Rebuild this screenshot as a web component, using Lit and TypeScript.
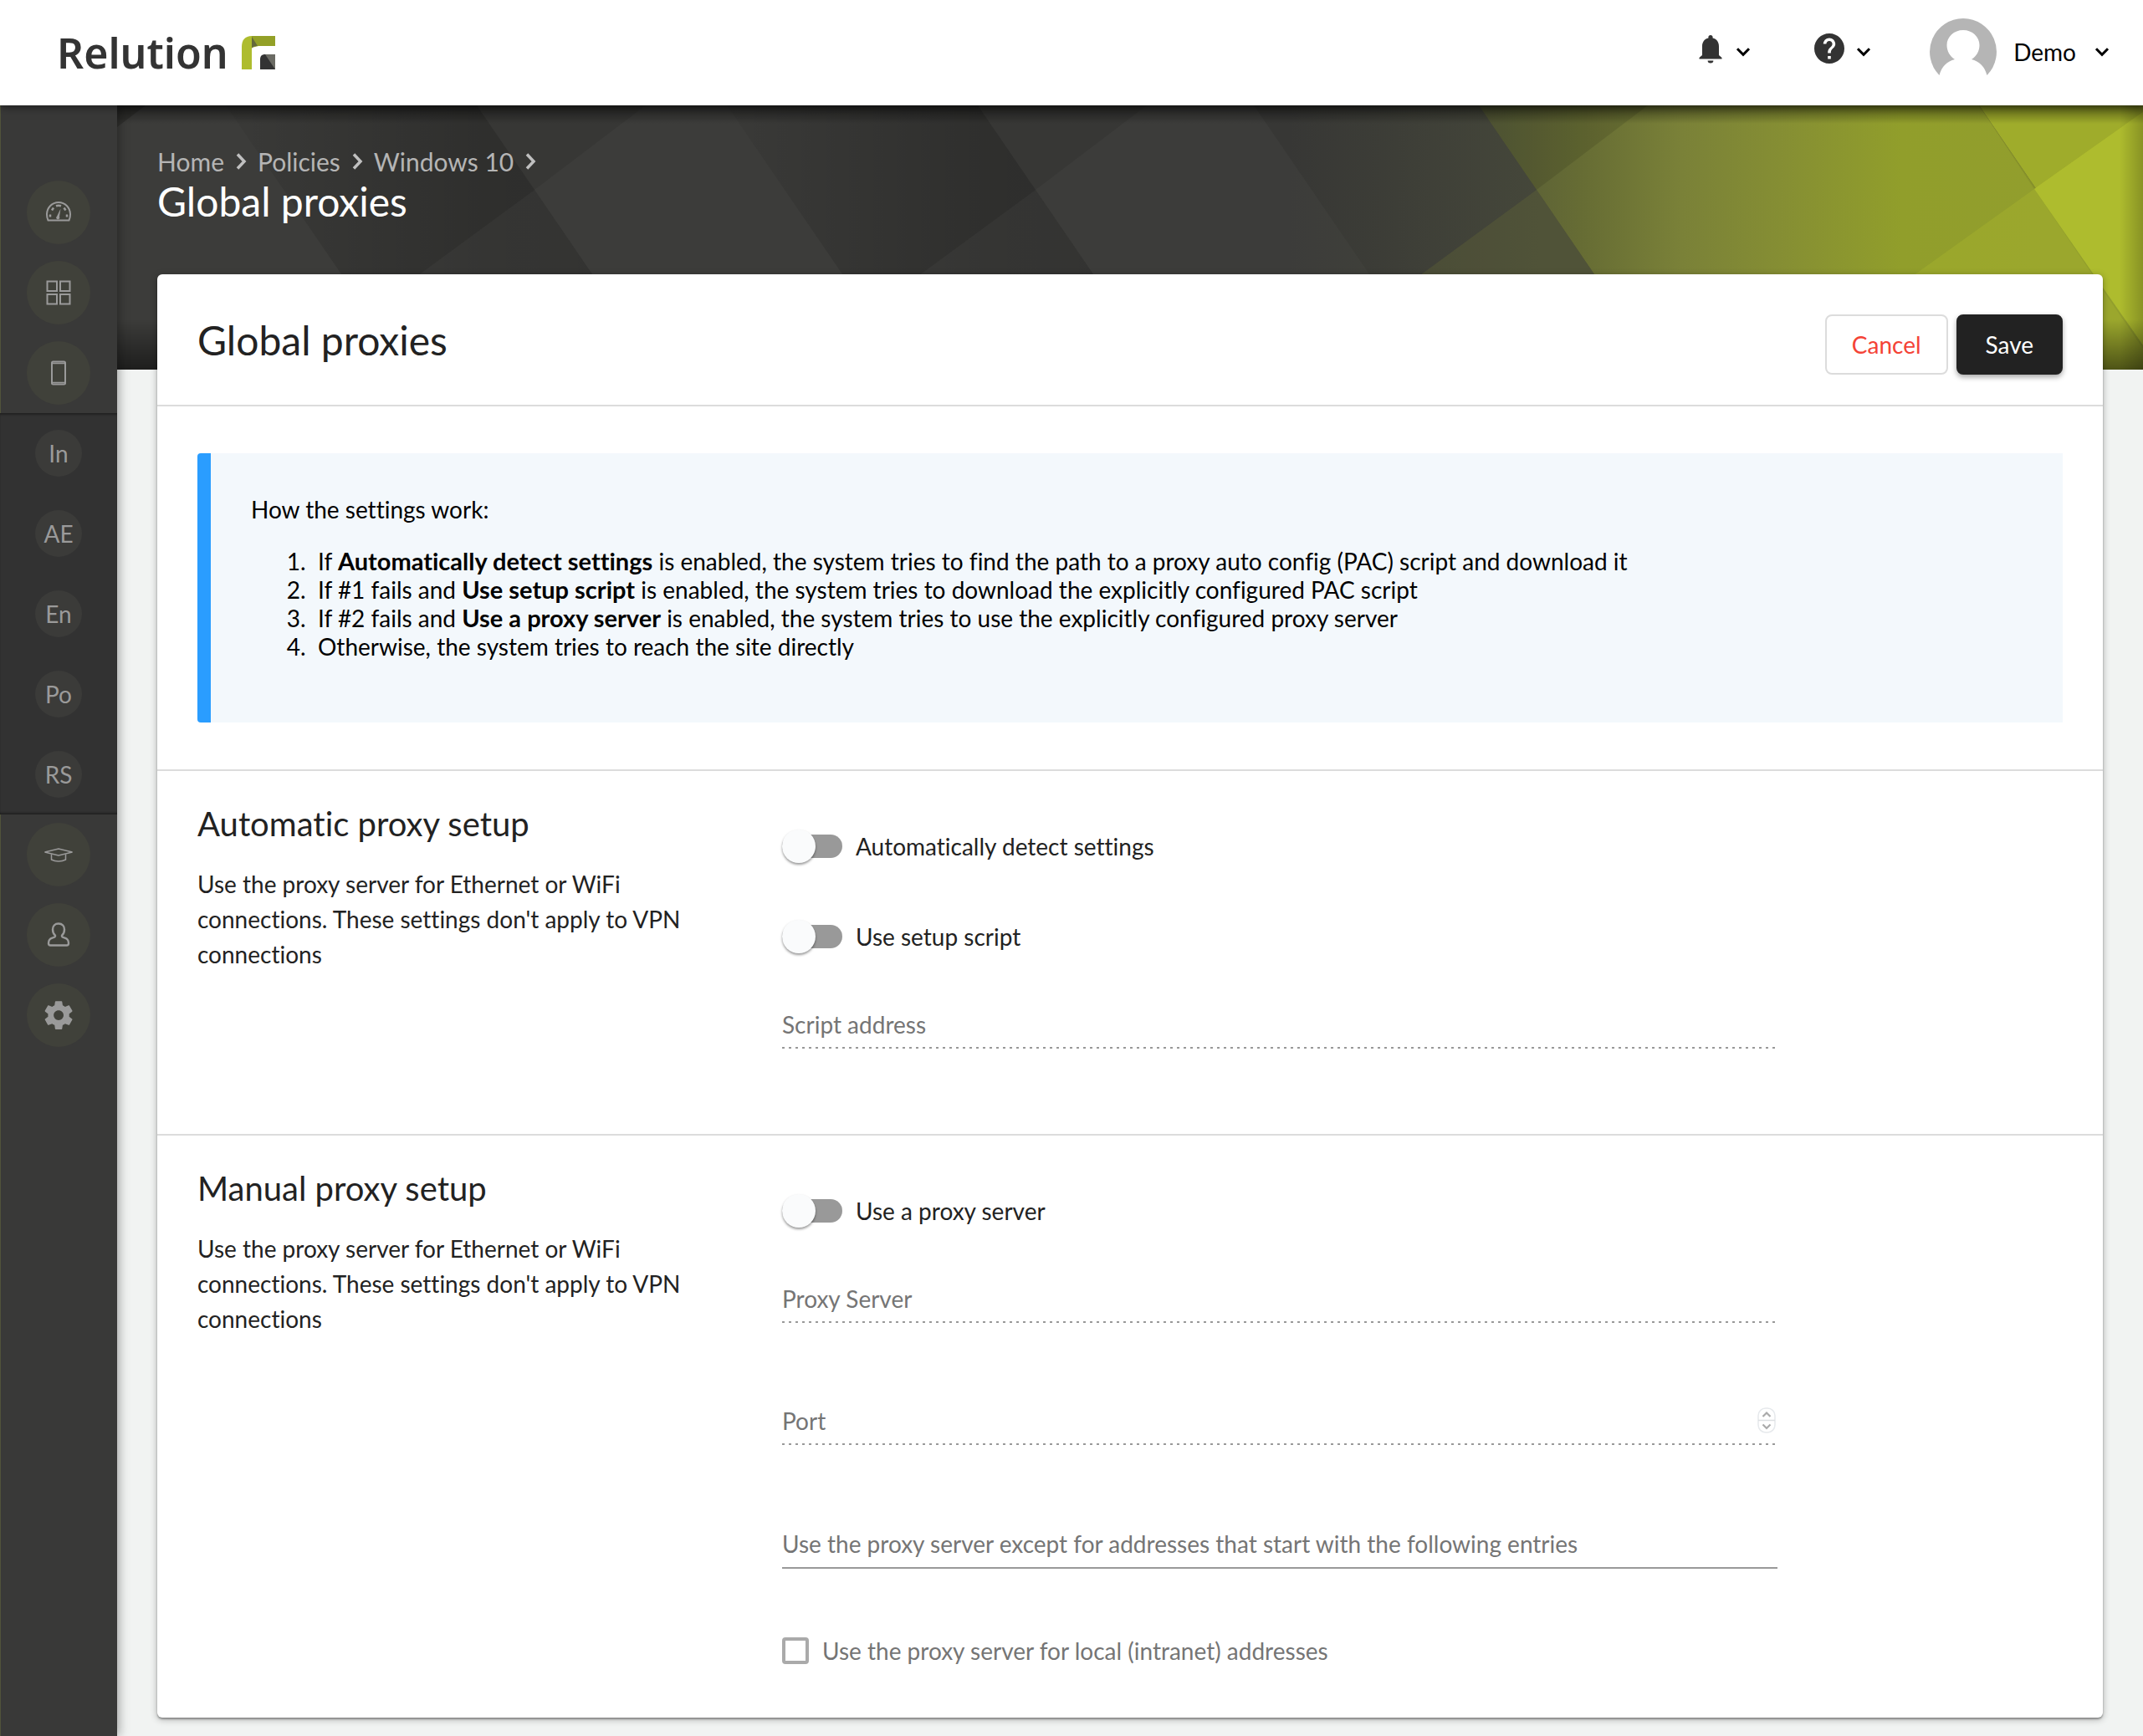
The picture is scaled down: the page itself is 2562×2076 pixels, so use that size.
import { LitElement, html, css, svg, nothing } from "lit";
import { customElement } from "lit/decorators.js";

const chevronDown = html`<svg class="caret" viewBox="0 0 18 12" aria-hidden="true"><path d="M2 2.2 9 9.4 16 2.2" /></svg>`;
const chevronRight = html`<svg class="sep" viewBox="0 0 14 20" aria-hidden="true"><path d="M3 1.5 11 10 3 18.5" /></svg>`;

const icons = {
  dashboard: svg`<path d="M2.500 23.500C1.500 21.500 1 19 1 16.500 1 8.500 7 2 15 2s14 6.500 14 14.500c0 2.500-.5 5-1.500 7z" transform="translate(0 1)"/>
    <path d="M5 20.500v-3M7 12.500l2-3M12 7.300c2-.7 4-.7 6 0M21.500 9.500l2 3M25 20.500v-3" stroke-width="2.500"/>
    <path d="M17.500 10.500l-4.500 9.200a2 2 0 1 0 3 .6z" fill="currentColor" stroke="none"/>`,
  grid: svg`<rect x="1.500" y="1.500" width="11.500" height="11.500"/><rect x="17" y="1.500" width="11.500" height="11.500"/><rect x="1.500" y="17" width="11.500" height="11.500"/><rect x="17" y="17" width="11.500" height="11.500"/>`,
  phone: svg`<rect x="7" y="1.500" width="16" height="27" rx="1.500"/><path d="M7 3.500h16M7 26.500h16" stroke-width="1.500"/>`,
  education: svg`<path d="M-1.500 12 15 8l16.500 4L15 16z" stroke-width="1.500"/><path d="M6.500 14.500V21c5 2.600 12 2.600 17 0v-6.500" stroke-width="1.500"/>`,
  user: svg`<path d="M15 1.500c-4.500 0-7 3-7 7 0 3 1 5.500 3 7.200.6 1.800-1 2.300-3.500 3C4 19.800 3 22 3 25c0 1.500.7 2.500 2.200 2.500h19.600c1.500 0 2.200-1 2.200-2.500 0-3-1-5.200-4.500-6.300-2.500-.7-4.100-1.200-3.500-3 2-1.700 3-4.200 3-7.200 0-4-2.500-7-7-7z" stroke-width="2.400"/>`,
  settings: svg`<g transform="translate(-5.200 -5.200) scale(1.690)"><path fill="currentColor" stroke="none" d="M19.430 12.980c.04-.32.070-.640.070-.980s-.03-.660-.07-.980l2.110-1.650c.19-.15.240-.42.120-.640l-2-3.460c-.12-.22-.39-.3-.61-.22l-2.490 1c-.52-.4-1.080-.730-1.690-.980l-.38-2.650C14.460 2.180 14.250 2 14 2h-4c-.25 0-.46.180-.49.420l-.38 2.650c-.61.250-1.170.59-1.690.980l-2.490-1c-.23-.09-.49 0-.61.220l-2 3.460c-.13.220-.07.490.12.640l2.110 1.650c-.04.320-.07.650-.07.980s.03.660.07.980l-2.110 1.650c-.19.150-.24.420-.12.640l2 3.460c.12.220.39.3.61.220l2.490-1c.52.4 1.080.730 1.690.980l.38 2.650c.03.240.24.420.49.420h4c.25 0 .46-.18.490-.42l.38-2.650c.61-.25 1.170-.59 1.690-.980l2.490 1c.23.090.49 0 .61-.22l2-3.460c.12-.22.070-.49-.12-.640l-2.110-1.650zM12 15.500c-1.930 0-3.500-1.570-3.500-3.500s1.570-3.500 3.500-3.500 3.500 1.570 3.500 3.500-1.570 3.500-3.500 3.500z"/></g>`,
};

type IconName = keyof typeof icons;

const topNav: [IconName, string][] = [
  ["dashboard", "Dashboard"],
  ["grid", "Apps"],
  ["phone", "Devices"],
];
const shortcuts = ["In", "AE", "En", "Po", "RS"];
const bottomNav: [IconName, string][] = [
  ["education", "Education"],
  ["user", "Users"],
  ["settings", "Settings"],
];

@customElement("app-header")
export class AppHeader extends LitElement {
  static styles = css`
    :host {
      display: flex;
      align-items: center;
      justify-content: space-between;
      height: 126px;
      box-sizing: border-box;
      padding: 0 40px 0 68px;
      background: #fff;
      box-shadow: 0 2px 10px rgba(0, 0, 0, 0.5);
      z-index: 2;
      font-size: 28px;
      color: #000;
    }
    .brand {
      display: flex;
      align-items: center;
      gap: 16px;
      color: #333;
      text-decoration: none;
      font: 600 50px/64px "Noto Sans", sans-serif;
    }
    .mark { width: 40px; height: 40px; }
    .tools { display: flex; align-items: center; padding-bottom: 2px; }
    button {
      display: flex;
      align-items: center;
      border: 0;
      padding: 0;
      background: none;
      font: inherit;
      color: inherit;
    }
    .bell { gap: 16px; margin-right: 76px; }
    .help { gap: 14px; margin-right: 70px; }
    .user { gap: 20px; }
    .bell-icon { width: 28px; height: 34px; margin-bottom: 6px; }
    .help-icon { width: 36px; height: 36px; margin-bottom: 8px; }
    .avatar { width: 80px; height: 80px; }
    .name { margin-right: 2px; }
    .caret { width: 18px; height: 12px; fill: none; stroke: #000; stroke-width: 3; }
  `;
  render() {
    return html`
      <a class="brand" href="#"><span>Relution</span>
        <svg class="mark" viewBox="0 0 40 40" aria-hidden="true">
          <path d="M12 0h28v12H20l-8 2z" fill="#93a027" />
          <path d="M12 0C4 0 0 5 0 13v27h12V0z" fill="#aebc2e" />
          <path d="M12 1l7 11c-4 0-7 1-7 4z" fill="#64693a" />
          <path d="M22 40V28c0-4 2-6 6-6h12v18z" fill="#333" />
          <path d="M28 22h12v18z" fill="#6b6b64" />
        </svg>
      </a>
      <div class="tools">
        <button class="bell" aria-label="Notifications">
          <svg class="bell-icon" viewBox="0 0 28 34" aria-hidden="true">
            <path fill="#333" d="M14 0c-1.600 0-2.600 1-2.600 2.600v1C6.500 4.800 4 8.500 4 13.500V24l-3.500 3v1.500h27V27L24 24V13.500c0-5-2.500-8.700-7.400-9.900v-1C16.600 1 15.600 0 14 0zM10.600 30.500a3.400 3 0 0 0 6.800 0z" />
          </svg>
          ${chevronDown}
        </button>
        <button class="help" aria-label="Help">
          <svg class="help-icon" viewBox="2 2 20 20" aria-hidden="true">
            <path fill="#333" d="M12 2C6.480 2 2 6.480 2 12s4.480 10 10 10 10-4.480 10-10S17.520 2 12 2zm1 17h-2v-2h2v2zm2.070-7.750l-.9.920C13.450 12.900 13 13.500 13 15h-2v-.5c0-1.100.45-2.100 1.170-2.830l1.240-1.260c.37-.36.590-.86.590-1.410 0-1.100-.9-2-2-2s-2 .9-2 2H8c0-2.210 1.790-4 4-4s4 1.790 4 4c0 .88-.36 1.680-.93 2.250z" />
          </svg>
          ${chevronDown}
        </button>
        <button class="user">
          <svg class="avatar" viewBox="0 0 80 80" aria-hidden="true">
            <path fill="#b5b5b5" d="M40 0a40 40 0 0 0-28.500 68C14 58 21 51 30 49c-6-4-9.500-10-9.500-17 0-10 8.500-18 19.500-18s19.500 8 19.500 18c0 7-3.500 13-9.500 17 9 2 16 9 18.500 19A40 40 0 0 0 40 0z" />
          </svg>
          <span class="name">Demo</span>
          ${chevronDown}
        </button>
      </div>
    `;
  }
}

@customElement("side-nav")
export class SideNav extends LitElement {
  static styles = css`
    :host {
      display: block;
      box-sizing: border-box;
      width: 140px;
      padding-top: 80px;
      background: #393938;
      color: #9a9a9a;
      font-size: 28px;
      line-height: 40px;
      box-shadow: inset 1px 0 0 #50533a, 2px 0 12px rgba(0, 0, 0, 0.35);
      z-index: 1;
    }
    .group { display: flex; flex-direction: column; }
    .shortcuts { background: #323232; box-shadow: inset 0 3px 2px -1px #222, inset 0 -3px 2px -1px #222; }
    a {
      display: flex;
      align-items: center;
      justify-content: center;
      height: 96px;
      color: inherit;
      text-decoration: none;
    }
    .disc {
      display: flex;
      align-items: center;
      justify-content: center;
      width: 76px;
      height: 76px;
      border-radius: 50%;
      background: #40413a;
    }
    .small { width: 56px; height: 56px; background: #3b3b39; }
    svg { width: 30px; height: 30px; overflow: visible; fill: none; stroke: currentColor; stroke-width: 2; }
  `;
  private iconLink([name, label]: [IconName, string]) {
    return html`<a href="#" aria-label=${label}><span class="disc"><svg viewBox="0 0 30 30" aria-hidden="true">${icons[name]}</svg></span></a>`;
  }
  render() {
    return html`
      <nav aria-label="Main">
        <div class="group">${topNav.map((i) => this.iconLink(i))}</div>
        <div class="group shortcuts">
          ${shortcuts.map((s) => html`<a href="#"><span class="disc small">${s}</span></a>`)}
        </div>
        <div class="group">${bottomNav.map((i) => this.iconLink(i))}</div>
      </nav>
    `;
  }
}

@customElement("hero-banner")
export class HeroBanner extends LitElement {
  static styles = css`
    :host { display: block; height: 316px; overflow: hidden; background: #3b3b39; }
    svg { display: block; width: 100%; height: 100%; }
  `;
  private facet(x: number) {
    return svg`
      <path d="M${x} 0L${x + 69} 101L${x + 202} 0z" fill="#000" opacity=".08"/>
      <path d="M${x + 69} 101L${x - 224} 316H${x + 216}z" fill="#fff" opacity=".03"/>`;
  }
  render() {
    const fold = (x: number) => svg`<path d="M${x} 0h300l216 316h-300z" fill="url(#fold)"/>`;
    return html`
      <svg viewBox="0 0 2422 316" preserveAspectRatio="xMaxYMin slice" aria-hidden="true">
        <defs>
          <linearGradient id="fold"><stop offset="0" stop-color="#000" stop-opacity=".04" /><stop offset=".6" stop-color="#000" stop-opacity=".22" /><stop offset="1" stop-color="#000" stop-opacity=".26" /></linearGradient>
          <linearGradient id="glow" gradientUnits="userSpaceOnUse" x1="1400" x2="1700" y1="0" y2="0"><stop offset="0" stop-color="#45473a" stop-opacity="0" /><stop offset="1" stop-color="#45473a" /></linearGradient>
          <linearGradient id="green" gradientUnits="userSpaceOnUse" x1="1628" x2="2300" y1="0" y2="0">
            <stop offset="0" stop-color="#555a39" /><stop offset=".18" stop-color="#666c34" /><stop offset=".36" stop-color="#7a8138" />
            <stop offset=".55" stop-color="#868f33" /><stop offset=".75" stop-color="#919e2b" /><stop offset="1" stop-color="#929e2d" />
          </linearGradient>
          <linearGradient id="top" x2="0" y2="1"><stop offset="0" stop-color="#000" stop-opacity=".45" /><stop offset="1" stop-color="#000" stop-opacity="0" /></linearGradient>
          <linearGradient id="bottom" x2="0" y2="1"><stop offset="0" stop-color="#000" stop-opacity="0" /><stop offset="1" stop-color="#000" stop-opacity=".5" /></linearGradient>
          <linearGradient id="edge"><stop offset="0" stop-color="#000" stop-opacity="0" /><stop offset="1" stop-color="#000" stop-opacity=".22" /></linearGradient>
        </defs>
        <rect width="2422" height="316" fill="#3c3c3a" />
        ${fold(130)}${fold(729)}
        <path d="M1359 0h269l216 316h-269z" fill="#000" opacity=".08" />
        <path d="M1029 0h599l216 316h-599z" fill="url(#glow)" />
        <path d="M1628 0h598l196 287v29h-578z" fill="url(#green)" />
        <path d="M2226 0h196v287z" fill="#aebc2e" />
        ${this.facet(430)}${this.facet(1029)}
        <path d="M1628 0l69 101L1830 0z" fill="#000" opacity=".1" />
        <path d="M1697 101L1404 316h440z" fill="#a4b030" opacity=".12" />
        <path d="M2226 0l66 100L2422 8V0z" fill="#5c6420" opacity=".18" />
        <path d="M2292 100L1990 316h449z" fill="#aebc2e" opacity=".3" />
        <path d="M2292 100L2422 8v279z" fill="#aebc2e" />
        <path d="M0 0h34L0 26z" fill="#000" opacity=".2" />
        <rect width="2422" height="22" fill="url(#top)" />
        <rect y="256" width="2422" height="60" fill="url(#bottom)" />
        <rect x="2394" width="28" height="316" fill="url(#edge)" />
      </svg>
    `;
  }
}

@customElement("proxy-settings")
export class ProxySettings extends LitElement {
  static styles = css`
    :host {
      display: block;
      border-radius: 6px;
      background: #fff;
      box-shadow: 0 2px 8px rgba(0, 0, 0, 0.3), 0 2px 2px rgba(0, 0, 0, 0.3);
      color: #222;
      font-size: 28px;
      line-height: 42px;
    }
    h2, h3, p, ol { margin: 0; font-weight: 400; }
    .head {
      display: flex;
      justify-content: space-between;
      align-items: flex-start;
      padding: 48px 48px 36px;
      border-bottom: 2px solid #dcdcdc;
    }
    h2 { font-size: 48px; line-height: 62px; }
    .actions { display: flex; gap: 10px; }
    button {
      box-sizing: border-box;
      height: 72px;
      padding: 0 30px;
      border: 2px solid #dcdcdc;
      border-radius: 8px;
      background: #fff;
      color: #f44336;
      font: inherit;
    }
    .primary {
      padding: 0 33px;
      border-color: #222;
      background: #222;
      color: #fff;
      box-shadow: 0 3px 6px rgba(0, 0, 0, 0.35);
    }
    .intro { padding: 56px 48px; border-bottom: 2px solid #dcdcdc; }
    .info {
      padding: 50px 48px 74px;
      border-left: 16px solid #2a9dff;
      border-radius: 4px 0 0 4px;
      background: #f3f8fc;
      color: #000;
      line-height: 34px;
    }
    ol { margin-top: 28px; padding-left: 80px; }
    li::marker { content: counter(list-item) ".\\00a0\\00a0"; }
    b { font-size: 29px; line-height: 32px; }
    .section {
      display: grid;
      grid-template-columns: 651fr 1190fr 293fr;
      column-gap: 48px;
      padding: 0 48px;
    }
    .section + .section { border-top: 2px solid #dcdcdc; }
    .about { display: flex; flex-direction: column; gap: 28px; padding-top: 40px; }
    .about p { max-width: 600px; }
    h3 { font-size: 40px; line-height: 46px; }
    .fields { display: flex; flex-direction: column; gap: 48px; padding: 60px 0; }
    .fields.last { padding-bottom: 50px; }
    .row { display: flex; align-items: center; gap: 16px; height: 60px; }
    .muted { color: #757575; margin-top: -22px; }
    .switch {
      appearance: none;
      width: 72px;
      height: 28px;
      margin: 0;
      border-radius: 14px;
      background: #999;
    }
    .switch::before {
      content: "";
      display: block;
      width: 40px;
      height: 40px;
      margin-top: -6px;
      border-radius: 50%;
      background: #fafbfc;
      box-shadow: 0 2px 3px rgba(0, 0, 0, 0.4);
    }
    .switch:checked::before { margin-left: 32px; }
    .tick {
      appearance: none;
      box-sizing: border-box;
      width: 32px;
      height: 32px;
      margin: 0;
      border: 4px solid #aaa;
      border-radius: 4px;
    }
    .field {
      display: grid;
      grid-template-columns: minmax(0, 1fr) auto;
      align-items: center;
      height: 54px;
      margin-bottom: 42px;
      color: #757575;
      background: repeating-linear-gradient(90deg, #999 0 3px, transparent 3px 8px) left bottom / 100% 2px no-repeat;
      padding-bottom: 2px;
    }
    .field.solid { background: none; border-bottom: 2px solid #999; height: 56px; padding-bottom: 0; }
    .field label { grid-area: 1 / 1; pointer-events: none; }
    .field input {
      grid-area: 1 / 1 / 2 / 3;
      width: 100%;
      height: 42px;
      box-sizing: border-box;
      padding: 0;
      border: 0;
      background: none;
      font: inherit;
      color: inherit;
      appearance: textfield;
      outline: none;
    }
    .field input::-webkit-inner-spin-button { appearance: none; }
    .spin { grid-area: 1 / 2; width: 22px; height: 32px; margin-right: 2px; }
  `;
  private toggle(id: string, label: string) {
    return html`<div class="row"><input class="switch" type="checkbox" role="switch" id=${id} /><label for=${id}>${label}</label></div>`;
  }
  private field(id: string, label: string, opts: { type?: string; disabled?: boolean } = {}) {
    const { type = "text", disabled = true } = opts;
    return html`<div class="field ${disabled ? "" : "solid"}">
      <label for=${id}>${label}</label>
      <input id=${id} type=${type} ?disabled=${disabled} />
      ${type === "number"
        ? html`<svg class="spin" viewBox="0 0 22 32" fill="none" aria-hidden="true">
            <rect x="1" y="1" width="20" height="29" rx="9" stroke="#e6e9ec" stroke-width="1.500" />
            <path d="M1 15.500h20" stroke="#dcdfe2" stroke-width="1.500" />
            <path d="M6.500 11 11 6.500l4.500 4.500M6.500 20.500 11 25l4.500-4.500" stroke="#aaa" stroke-width="2.200" />
          </svg>`
        : nothing}
    </div>`;
  }
  private about(title: string) {
    return html`<div class="about">
      <h3>${title}</h3>
      <p>Use the proxy server for Ethernet or WiFi connections. These settings don't apply to VPN connections</p>
    </div>`;
  }
  render() {
    return html`
      <div class="head">
        <h2>Global proxies</h2>
        <div class="actions"><button>Cancel</button><button class="primary">Save</button></div>
      </div>
      <div class="intro">
        <div class="info">
          <p>How the settings work:</p>
          <ol>
            <li>If <b>Automatically detect settings</b> is enabled, the system tries to find the path to a proxy auto config (PAC) script and download it</li>
            <li>If #1 fails and <b>Use setup script</b> is enabled, the system tries to download the explicitly configured PAC script</li>
            <li>If #2 fails and <b>Use a proxy server</b> is enabled, the system tries to use the explicitly configured proxy server</li>
            <li>Otherwise, the system tries to reach the site directly</li>
          </ol>
        </div>
      </div>
      <section class="section">
        ${this.about("Automatic proxy setup")}
        <div class="fields">
          ${this.toggle("detect", "Automatically detect settings")}
          ${this.toggle("script", "Use setup script")}
          ${this.field("address", "Script address")}
        </div>
      </section>
      <section class="section">
        ${this.about("Manual proxy setup")}
        <div class="fields last">
          ${this.toggle("manual", "Use a proxy server")}
          ${this.field("server", "Proxy Server")}
          ${this.field("port", "Port", { type: "number" })}
          ${this.field("except", "Use the proxy server except for addresses that start with the following entries", { disabled: false })}
          <div class="row muted"><input class="tick" type="checkbox" id="local" disabled /><label for="local">Use the proxy server for local (intranet) addresses</label></div>
        </div>
      </section>
    `;
  }
}

@customElement("app-root")
export class AppRoot extends LitElement {
  static styles = css`
    :host {
      display: flex;
      flex-direction: column;
      min-height: 100vh;
      background: #f1f3f2;
      font-family: Lato, "Noto Sans", sans-serif;
      font-variant-ligatures: none;
    }
    .body { display: flex; flex: 1; }
    .main { display: grid; grid-template-columns: minmax(0, 1fr); flex: 1; align-items: start; min-width: 0; }
    hero-banner { grid-area: 1 / 1; }
    side-nav { flex: none; }
    .content { grid-area: 1 / 1; z-index: 0; padding: 48px 48px 22px; }
    .crumbs {
      display: flex;
      align-items: center;
      gap: 13px;
      font-size: 30px;
      line-height: 38px;
    }
    .crumbs a { color: #b5b5b5; text-decoration: none; }
    .sep { width: 14px; height: 20px; fill: none; stroke: #c0c0c0; stroke-width: 3.500; }
    h1 { margin: 0 0 58px; color: #fff; font-weight: 400; font-size: 48px; line-height: 58px; }
  `;
  render() {
    return html`
      <app-header></app-header>
      <div class="body">
        <side-nav></side-nav>
        <main class="main">
          <hero-banner></hero-banner>
          <div class="content">
            <nav class="crumbs" aria-label="Breadcrumb">
              ${["Home", "Policies", "Windows 10"].map((c) => html`<a href="#">${c}</a>${chevronRight}`)}
            </nav>
            <h1>Global proxies</h1>
            <proxy-settings></proxy-settings>
          </div>
        </main>
      </div>
    `;
  }
}
